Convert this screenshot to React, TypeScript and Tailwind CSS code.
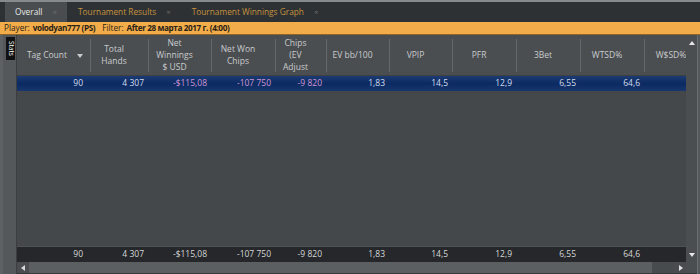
import React from "react"

type Col = { w: string; label: string[]; sort?: boolean }

const cols: Col[] = [
  { w: "w-[74px]", label: ["Tag Count"], sort: true },
  { w: "w-[58px]", label: ["Total", "Hands"] },
  { w: "w-[63px]", label: ["Net", "Winnings", "$ USD"] },
  { w: "w-[64px]", label: ["Net Won", "Chips"] },
  { w: "w-[51px]", label: ["Chips", "(EV", "Adjust"] },
  { w: "w-[63px]", label: ["EV bb/100"] },
  { w: "w-[63px]", label: ["VPIP"] },
  { w: "w-[64px]", label: ["PFR"] },
  { w: "w-[64px]", label: ["3Bet"] },
  { w: "w-[64px]", label: ["WTSD%"] },
  { w: "w-[64px]", label: ["W$SD%"] },
]

const values = ["90", "4 307", "-$115,08", "-107 750", "-9 820", "1,83", "14,5", "12,9", "6,55", "64,6", "55,6"]
const negative = [false, false, true, true, true, false, false, false, false, false, false]

const tabs = [
  { label: "Overall", active: true },
  { label: "Tournament Results" },
  { label: "Tournament Winnings Graph" },
]

function Tri({ dir, className }: { dir: "up" | "down" | "left" | "right"; className?: string }) {
  const pts = {
    up: "0,4 3,0 6,4",
    down: "0,0 6,0 3,4",
    left: "4,0 4,6 0,3",
    right: "0,0 0,6 4,3",
  }[dir]
  const size = dir === "up" || dir === "down" ? { w: 6, h: 4 } : { w: 4, h: 6 }
  return (
    <svg width={size.w} height={size.h} viewBox={`0 0 ${size.w} ${size.h}`} className={className}>
      <polygon points={pts} fill="currentColor" />
    </svg>
  )
}

export default function App() {
  return (
    <div className="w-[700px] h-[274px] flex flex-col overflow-hidden bg-[#45484b] font-['Open_Sans',sans-serif] select-none">
      {/* tab strip */}
      <div className="h-[2px] bg-[#868a8e]" />
      <div className="h-[20px] bg-[#2e3133] flex items-stretch pl-[5px]">
        {tabs.map((t) => (
          <div
            key={t.label}
            className={
              t.active
                ? "flex items-center gap-[10px] pl-[10px] pr-[10px] bg-[#4a4d50] text-[#e6e6e6]"
                : "flex items-center gap-[10px] pl-[11px] pr-[10px] text-[#c4923f]"
            }
          >
            <span className="text-[8.3px] leading-none">{t.label}</span>
            <span className="text-[8px] leading-none text-[#6c6f72]">×</span>
          </div>
        ))}
      </div>

      {/* filter bar */}
      <div className="h-[13px] bg-[#f2ad4a] border-b border-[#8a6428] flex items-center pl-[4px] text-[8.2px] leading-none text-[#2a2216] whitespace-nowrap">
        <span>Player:</span>
        <span className="font-bold tracking-[-0.4px] ml-[3px]">volodyan777 (PS)</span>
        <span className="ml-[7px]">Filter:</span>
        <span className="font-bold tracking-[-0.4px] ml-[3px]">After 28 марта 2017 г. (4:00)</span>
      </div>

      {/* body */}
      <div className="flex-1 flex min-h-0">
        <div className="w-[17px] shrink-0 bg-[#55585a] border-l-[3px] border-l-[#5e6163] border-r border-r-[#3b3d3f] pt-[2px] pl-[3px]">
          <div className="w-[9px] h-[23px] bg-[#111] text-white text-[6.5px] leading-none flex items-center justify-center [writing-mode:vertical-rl]">
            Stats
          </div>
        </div>

        <div className="flex-1 flex flex-col min-w-0">
          <div className="flex-1 flex min-h-0">
            {/* grid */}
            <div className="flex-1 flex flex-col min-w-0 overflow-hidden">
              <div className="h-[41px] flex bg-[#4b4e51] text-[#c9cbcd] text-[8.5px] border-b border-[#3e4043]">
                {cols.map((c) => (
                  <div key={c.label.join(" ")} className={`${c.w} shrink-0 flex items-center`}>
                    <div
                      className={
                        c.sort
                          ? "flex-1 flex flex-col items-center leading-[12px]"
                          : "flex-1 flex flex-col items-center leading-[12px] pr-[11px]"
                      }
                    >
                      {c.label.map((l) => (
                        <span key={l} className="whitespace-nowrap">{l}</span>
                      ))}
                    </div>
                    {c.sort && <Tri dir="down" className="text-[#c9cbcd] mr-[7px] mt-[1px]" />}
                    <div className="w-px h-[33px] bg-[#65686b] shrink-0" />
                  </div>
                ))}
              </div>

              <div className="h-[15px] flex bg-gradient-to-b from-[#1c3b72] via-[#0b2a62] to-[#17366d] text-[8.5px] leading-none">
                {cols.map((c, i) => (
                  <div
                    key={i}
                    className={`${c.w} shrink-0 flex items-center justify-end whitespace-nowrap ${
                      i === 0 ? "pr-[8px]" : "pr-[5px]"
                    } ${negative[i] ? "text-[#cf96d3]" : "text-[#d3ddef]"}`}
                  >
                    {values[i]}
                  </div>
                ))}
              </div>

              <div className="flex-1 bg-[#45484b] border-b border-[#4f5255]" />

              <div className="h-[15px] flex bg-[#25272a] text-[8.5px] leading-none text-[#d6d7d8]">
                {cols.map((c, i) => (
                  <div
                    key={i}
                    className={`${c.w} shrink-0 flex items-center justify-end whitespace-nowrap ${
                      i === 0 ? "pr-[8px]" : "pr-[5px]"
                    }`}
                  >
                    {values[i]}
                  </div>
                ))}
              </div>
            </div>

            {/* vertical scrollbar */}
            <div className="w-[11px] shrink-0 bg-[#4b4e51] flex flex-col items-center justify-between pt-[6px] pb-[5px] text-[#e8e8e8]">
              <Tri dir="up" />
              <Tri dir="down" />
            </div>
          </div>

          {/* horizontal scrollbar */}
          <div className="h-[11px] flex">
            <div className="w-[12px] bg-[#4a4d50] flex items-center pl-[4px] text-[#d8d8d8]">
              <Tri dir="left" />
            </div>
            <div className="flex-1 flex">
              <div className="flex-1 bg-[#5c5f62]" />
              <div className="w-[23px] bg-[#484b4e]" />
            </div>
            <div className="w-[11px] bg-[#4a4d50] flex items-center justify-center text-[#e0e0e0]">
              <Tri dir="right" />
            </div>
            <div className="w-[11px] bg-[#4b4e51]" />
          </div>
          <div className="h-px bg-[#36383a]" />
        </div>

        <div className="w-[3px] shrink-0 bg-[#55585a] border-l border-[#6a6d70]" />
      </div>
    </div>
  )
}
